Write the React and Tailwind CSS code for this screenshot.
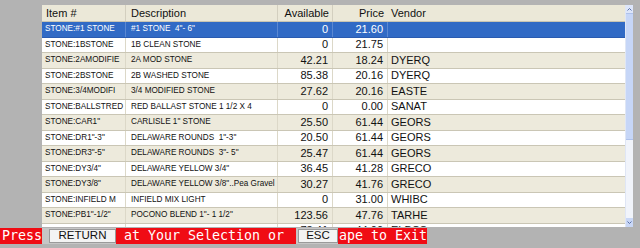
import React from "react";

const rows = [
  ["STONE:#1 STONE", "#1 STONE  4\"- 6\"", "0", "21.60", ""],
  ["STONE:1BSTONE", "1B CLEAN STONE", "0", "21.75", ""],
  ["STONE:2AMODIFIE", "2A MOD STONE", "42.21", "18.24", "DYERQ"],
  ["STONE:2BSTONE", "2B WASHED STONE", "85.38", "20.16", "DYERQ"],
  ["STONE:3/4MODIFI", "3/4 MODIFIED STONE", "27.62", "20.16", "EASTE"],
  ["STONE:BALLSTRED", "RED BALLAST STONE 1 1/2 X 4", "0", "0.00", "SANAT"],
  ["STONE:CAR1\"", "CARLISLE 1\" STONE", "25.50", "61.44", "GEORS"],
  ["STONE:DR1\"-3\"", "DELAWARE ROUNDS  1\"-3\"", "20.50", "61.44", "GEORS"],
  ["STONE:DR3\"-5\"", "DELAWARE ROUNDS  3\"- 5\"", "25.47", "61.44", "GEORS"],
  ["STONE:DY3/4\"", "DELAWARE YELLOW 3/4\"", "36.45", "41.28", "GRECO"],
  ["STONE:DY3/8\"", "DELAWARE YELLOW 3/8\"..Pea Gravel", "30.27", "41.76", "GRECO"],
  ["STONE:INFIELD M", "INFIELD MIX LIGHT", "0", "31.00", "WHIBC"],
  ["STONE:PB1\"-1/2\"", "POCONO BLEND 1\"- 1 1/2\"", "123.56", "47.76", "TARHE"],
  ["STONE:RR2\"", "RIVER ROCK 2\"", "73.41", "44.00", "ELBCS"],
];

const grid = "grid grid-cols-[84px_152px_55px_55px_1fr]";

export default function App() {
  return (
    <div
      className="w-[640px] h-[248px] bg-[#b3b3b3] overflow-hidden flex flex-col pt-[5px]"
      style={{ fontFamily: '"Liberation Sans", Arial, sans-serif' }}
    >
      <div className="ml-[42px] w-[591px] h-[222px] flex">
        {/* table */}
        <div className="w-[583px] h-full bg-white overflow-hidden flex flex-col">
          <div className={`${grid} h-[17px] shrink-0 bg-[#ebe8d8] border-b border-[#c9c5b3] text-[11px] text-[#111] leading-none`}>
            <div className="flex items-center pl-[4px] border-r border-[#d3cfbf]">Item #</div>
            <div className="flex items-center pl-[5px] border-r border-[#d3cfbf]">Description</div>
            <div className="flex items-center justify-end pr-[3px] border-r border-[#d3cfbf]">Available</div>
            <div className="flex items-center justify-end pr-[4px]">Price</div>
            <div className="flex items-center pl-[3px]">Vendor</div>
          </div>
          {rows.map((r, i) => {
            const sel = i === 0;
            const bg = sel ? "bg-[#316ac5] text-white" : i % 2 === 0 ? "bg-[#edeadc] text-[#111]" : "bg-white text-[#111]";
            const sep = sel ? "border-[#5b88d2]" : "border-[#dcd8c8]";
            return (
              <div
                key={i}
                className={`${grid} h-[15.5px] shrink-0 border-b ${sel ? "border-[#2a5bb0]" : "border-[#cac6b5]"} ${bg} leading-none`}
              >
                <div className={`flex items-center pl-[3px] text-[8.2px] whitespace-pre overflow-hidden border-r ${sep}`}>{r[0]}</div>
                <div className={`flex items-center pl-[5px] text-[8.2px] whitespace-pre overflow-hidden border-r ${sep}`}>{r[1]}</div>
                <div className={`flex items-center justify-end pr-[4px] text-[11px] border-r ${sep}`}>{r[2]}</div>
                <div className={`flex items-center justify-end pr-[4px] text-[11px] border-r ${sep}`}>{r[3]}</div>
                <div className="flex items-center pl-[3px] text-[11px]">{r[4]}</div>
              </div>
            );
          })}
        </div>
        {/* scrollbar */}
        <div className="w-[8px] h-full bg-[#f1f4fb] border-l border-[#dfe6f5] flex flex-col">
          <div className="h-[8px] flex items-center justify-center bg-[#dde6fa]">
            <svg width="5" height="3" viewBox="0 0 5 3">
              <path d="M0.5 2.5 L2.5 0.5 L4.5 2.5" stroke="#5870a8" strokeWidth="1" fill="none" />
            </svg>
          </div>
          <div className="h-[127px] bg-[#c6d6f7] border-y border-[#aec2ec]" />
          <div className="flex-1" />
          <div className="h-[9px] flex items-center justify-center bg-[#c9d7f6]">
            <svg width="5" height="3" viewBox="0 0 5 3">
              <path d="M0.5 0.5 L2.5 2.5 L4.5 0.5" stroke="#5870a8" strokeWidth="1" fill="none" />
            </svg>
          </div>
        </div>
      </div>
      {/* bottom prompt bar */}
      <div
        className="mt-[1px] h-[16px] flex text-white text-[13.3px] leading-none whitespace-pre"
        style={{ fontFamily: '"DejaVu Sans Mono", "Liberation Mono", monospace' }}
      >
        <div className="w-[42px] bg-[#f00c14] flex items-center pl-[2px]">Press</div>
        <div className="w-[74px] bg-[#c6c6c6] pl-[7px] py-[1px] flex">
          <div
            className="flex-1 bg-[#f3f3f3] border border-[#9a9a9a] flex items-center justify-center text-[11.5px] text-[#111]"
            style={{ fontFamily: '"Liberation Sans", Arial, sans-serif' }}
          >
            RETURN
          </div>
        </div>
        <div className="w-[180px] bg-[#f00c14] flex items-center">{" at Your Selection or"}</div>
        <div className="w-[42px] bg-[#c6c6c6] pl-[2px] py-[1px] flex">
          <div
            className="flex-1 bg-[#f3f3f3] border border-[#9a9a9a] flex items-center justify-center text-[11.5px] text-[#111]"
            style={{ fontFamily: '"Liberation Sans", Arial, sans-serif' }}
          >
            ESC
          </div>
        </div>
        <div className="w-[89px] bg-[#f00c14] flex items-center pl-[1px]">ape to Exit</div>
      </div>
    </div>
  );
}
